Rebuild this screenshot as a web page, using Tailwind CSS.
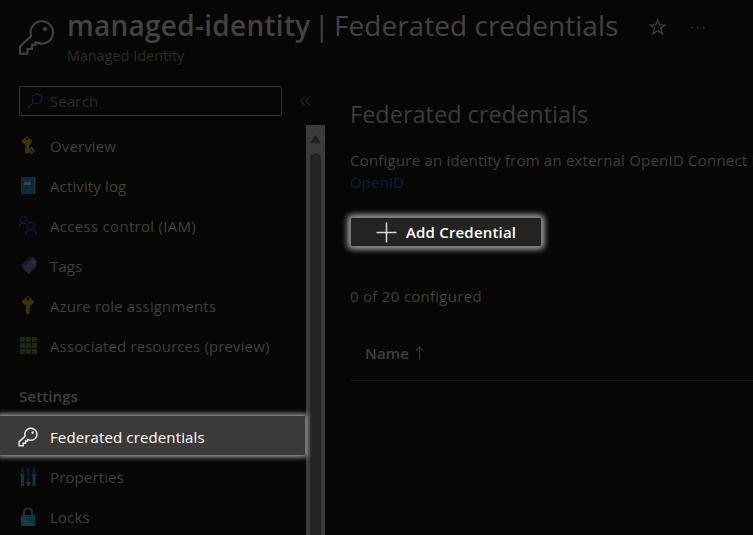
<!DOCTYPE html>
<html lang="en">
<head>
<meta charset="utf-8">
<title>managed-identity | Federated credentials</title>
<script src="https://cdn.jsdelivr.net/npm/@tailwindcss/browser@4"></script>
</head>
<body class="w-[753px] h-[535px] overflow-hidden bg-[#060604] text-[#403f3d] font-['Open_Sans','Noto_Sans',sans-serif] text-[15px] tracking-[0.13px] leading-5 whitespace-nowrap">
<header class="flex h-[80px]">
  <svg class="ml-[18px] mt-[19px] w-[37px] h-[37px] shrink-0" viewBox="0 0 37 37" fill="none" stroke="#444341" stroke-width="2"><path d="M13.4 17.500A11.200 11.200 0 1 1 19 23.500L17.500 23.300V25.800H14V30H9.500V34.800H2V27.500L13.400 16.800"/><circle cx="27" cy="10" r="2" fill="#444341" stroke="none"/></svg>
  <div class="ml-[12px] pt-[5px]">
    <h1 class="flex text-[28px] leading-[40px] text-[#434240]"><span class="w-[243px] font-semibold tracking-[0.27px]">managed-identity</span><span class="w-[24px] pl-[4px]">|</span><span class="tracking-[0.03px]">Federated credentials</span></h1>
    <p class="mt-px text-[14.200px] leading-5 text-[#2c2b2a]">Managed Identity</p>
  </div>
  <svg class="absolute left-[649px] top-[18px] w-[18px] h-[18px]" viewBox="0 0 18 18" fill="none" stroke="#444341" stroke-width="1.200"><path d="M8.700 2L10.700 7H16L11.800 10.300L13.400 15.800L8.700 12.500L4 15.800L5.600 10.300L1.400 7H6.700Z"/></svg>
  <svg class="absolute left-[690px] top-[25px] w-[16px] h-[4px]" viewBox="0 0 16 4" fill="#3f3e3c"><path d="M1 2h1.500v1.300H1zM7 2h1.500v1.300H7zM13 2h1.500v1.300H13z"/></svg>
</header>
<div class="flex h-[455px]">
  <aside class="w-[325px] shrink-0">
    <div class="flex items-center h-[45px] pl-[19px] pt-[6px] pb-[9px]">
      <div class="flex items-center w-[263px] h-[30px] border border-[#353432] rounded-[2px] pl-[7px] text-[#2c2b2a]">
        <svg class="w-[16px] h-[16px] mr-[7px]" viewBox="0 0 16 16" fill="none" stroke="#08223a" stroke-width="1.200"><circle cx="10" cy="6" r="4.800"/><path d="M6.500 9.500L.5 15.500"/></svg>
        <span>Search</span>
      </div>
      <svg class="ml-[17px] w-[13px] h-[12px]" viewBox="0 0 13 12" fill="none" stroke="#33322f" stroke-width="1"><path d="M6 1.500L1.500 6L6 10.500M11 1.500L6.500 6L11 10.500"/></svg>
    </div>
    <div class="flex h-[410px]">
      <nav class="w-[306px] pt-[1px] shrink-0">
        <a class="flex items-center h-10 pl-[18px]"><svg class="w-5 h-5 mr-[12px]" viewBox="0 0 20 20"><path d="M9 0L14 4.500Q14.500 6 13 7.500L11 9.500V16L9 18L6.500 16L7.500 14.500L6.500 13.500L7.500 12V9.500L4 6.500Q3 5 4 4Z" fill="#3f3207"/><circle cx="9" cy="3" r="1.300" fill="#0b0a04"/><path d="M13.500 10.500L17.500 14.500L13.500 18.500L9.500 14.500Z" fill="#213a42"/><path d="M13.500 12v5M11.500 14.800h4" stroke="#10242b"/></svg><span>Overview</span></a>
        <a class="flex items-center h-10 pl-[18px]"><svg class="w-5 h-5 mr-[12px]" viewBox="0 0 20 20"><rect x="3" y="1" width="14.500" height="17" rx="1" fill="#26343f"/><rect x="3" y="1" width="13" height="17" rx="1" fill="#0a2a40"/><rect x="6" y="6" width="7" height="3" fill="#34424a"/></svg><span>Activity log</span></a>
        <a class="flex items-center h-10 pl-[18px]"><svg class="w-5 h-5 mr-[12px]" viewBox="0 0 20 20" fill="none" stroke="#041c3d" stroke-width="1.400"><circle cx="5.500" cy="3.800" r="3.200"/><path d="M1 11C1.500 8.500 3.500 7 5.500 7Q7 7 8 8"/><circle cx="13" cy="10" r="3.700"/><path d="M7.500 19C8 15.500 10 13.800 13 13.800S18.200 15.500 18.800 19"/></svg><span class="tracking-[0.3px]">Access control (IAM)</span></a>
        <a class="flex items-center h-10 pl-[18px]"><svg class="w-5 h-5 mr-[12px]" viewBox="0 0 20 20"><path d="M11 1H17L18 6L8 16L2.500 9.500Z" fill="#1d103b"/><path d="M13 3L18.500 4V10L10.500 18L4.500 12Z" fill="#2b2038"/><circle cx="15.500" cy="6" r="1" fill="#45404b"/></svg><span>Tags</span></a>
        <a class="flex items-center h-10 pl-[18px]"><svg class="w-5 h-5 mr-[12px]" viewBox="0 0 20 20"><path d="M10 0L15.500 5Q16 6 15 7.500L12 10V12L11.500 13L12 14L11.500 15L12 16.500L10 19L8 17V10L4.500 7Q3.500 5.500 4.500 4.500Z" fill="#413006"/><circle cx="10" cy="3" r="1.500" fill="#090804"/></svg><span>Azure role assignments</span></a>
        <a class="flex items-center h-10 pl-[18px]"><svg class="w-5 h-5 mr-[12px]" viewBox="0 0 20 20" fill="#1c2c08"><path d="M2 1h5v5H2zM8 1h5v5H8zM14 1h5v5h-5zM2 7h5v5H2zM8 7h5v5H8zM14 7h5v5h-5zM2 13h5v5H2zM8 13h5v5H8zM14 13h5v5h-5z"/></svg><span>Associated resources (preview)</span></a>
        <h2 class="h-[50px] pt-[20px] pl-[19px] font-semibold">Settings</h2>
        <a class="relative z-10 flex items-center w-[305px] h-[39px] pl-[18px] pt-[2px] bg-[#3b3a38] text-white shadow-[0_0_5px_2px_#a5a5a3]"><svg class="w-5 h-5 mr-[12px]" viewBox="0 0 37 37" fill="none" stroke="#f0f0ef" stroke-width="2.600"><path d="M13.400 17.500A11.200 11.200 0 1 1 19 23.500L17.500 23.300V25.800H14V30H9.500V34.800H2V27.500L13.400 16.800"/><circle cx="27" cy="10" r="2.300" fill="#f0f0ef" stroke="none"/></svg><span>Federated credentials</span></a>
        <a class="flex items-center h-[41px] pl-[18px] pt-[3px]"><svg class="w-5 h-5 mr-[12px]" viewBox="0 0 20 20"><path d="M3 1h3v6H3zM9 1h3v14H9zM14.500 1h3v6h-3z" fill="#06183a"/><path d="M3 7h3v12H3zM2 7h5v1.500H2zM9 16h3v3H9zM8 15h5v1.500H8zM14.500 7h3v12h-3zM13.500 7h5v1.500h-5z" fill="#12343d"/></svg><span>Properties</span></a>
        <a class="flex items-center h-10 pl-[18px] pt-[1px]"><svg class="w-5 h-5 mr-[12px]" viewBox="0 0 20 20"><path d="M6 9V5.500Q6 1.500 10 1.500T14 5.500V9" fill="none" stroke="#12343d" stroke-width="2"/><rect x="3" y="8" width="14.500" height="11" rx="1" fill="#0b3643"/><path d="M3 9L17 18.500H4Q3 18.500 3 18Z" fill="#143f4a"/></svg><span>Locks</span></a>
      </nav>
      <div class="w-[19px] flex flex-col items-center bg-[#3b3b3b]">
        <svg class="mt-[10px] w-[11px] h-[9px]" viewBox="0 0 11 9"><path d="M5.500 1L10 7.500H1Z" fill="#232323" stroke="#232323" stroke-width="1.500" stroke-linejoin="round"/></svg>
        <div class="mt-[9px] w-[11px] flex-1 rounded-t-full bg-[#232323]"></div>
      </div>
    </div>
  </aside>
  <main class="flex-1 min-w-0 pl-[25px] overflow-hidden">
    <h2 class="mt-[18px] text-[23.500px] leading-8 tracking-normal text-[#3d3c3a]">Federated credentials</h2>
    <p class="mt-[19px] leading-[22px]"><span class="tracking-[0.21px]">Configure an identity from an external OpenID Connect P</span><br><span class="text-[#06223d]">OpenID</span></p>
    <button class="mt-[24px] flex items-center w-[192px] h-[30px] pl-[25px] rounded-[2px] border border-[#777674] bg-[#242322] text-white font-semibold tracking-[0.18px] shadow-[0_0_6px_2px_#b5b5b2]"><svg class="w-[21px] h-[21px] mr-[9px]" viewBox="0 0 21 21" stroke="#d8d8d2" stroke-width="1.500"><path d="M10.500 0.500V20.500M.5 10.500H20.500"/></svg><span>Add Credential</span></button>
    <p class="mt-[39px] leading-5 tracking-[0.28px]">0 of 20 configured</p>
    <div class="mt-[23px] flex items-center h-[52px] pl-[15px] pb-[3px] border-b border-[#151513] font-semibold"><span>Name</span><svg class="ml-[6px] w-[9px] h-[14px]" viewBox="0 0 9 14" fill="none" stroke="#343331" stroke-width="1.200"><path d="M4.500 13.500V1.500M1 4.500L4.500 1L8 4.500"/></svg></div>
  </main>
</div>
</body>
</html>
